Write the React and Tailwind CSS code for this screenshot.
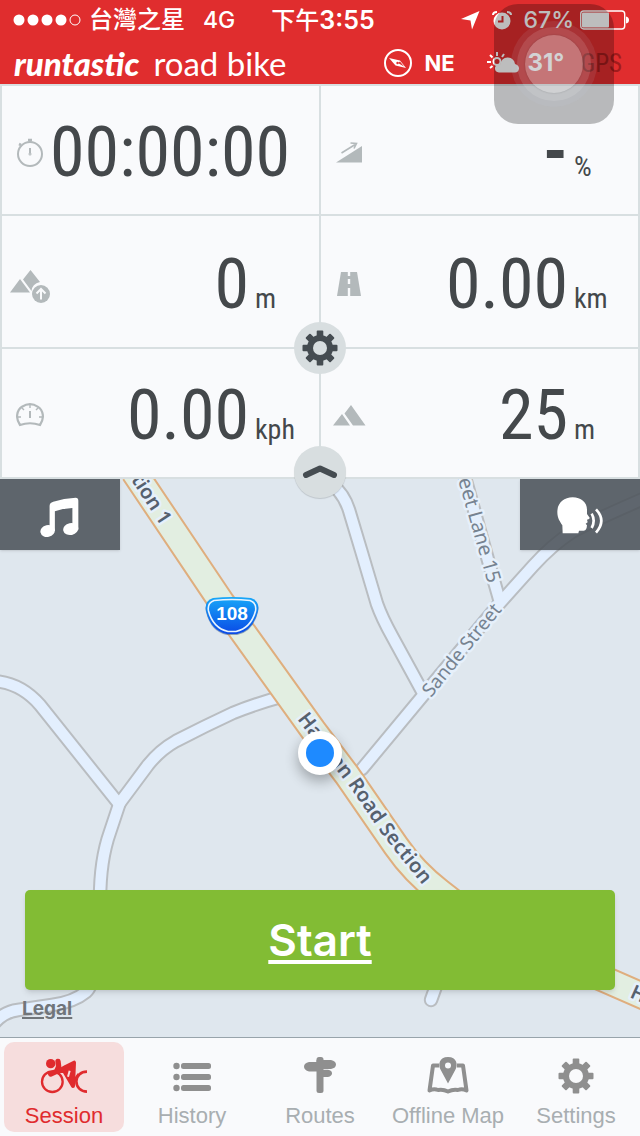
import React from 'react';

const tabs = [
  { name: 'Session', icon: CyclistIcon, active: true },
  { name: 'History', icon: ListIcon },
  { name: 'Routes', icon: SignpostIcon },
  { name: 'Offline Map', icon: MapPinIcon },
  { name: 'Settings', icon: TabGearIcon },
];

const stats = [
  { label: 'Duration', value: '00:00:00', icon: StopwatchIcon },
  { label: 'Grade', value: '-', unit: '%', icon: GradeIcon, empty: true },
  { label: 'Elevation gain', value: '0', unit: 'm', icon: ElevationGainIcon },
  { label: 'Distance', value: '0.00', unit: 'km', icon: RoadIcon },
  { label: 'Speed', value: '0.00', unit: 'kph', icon: SpeedIcon },
  { label: 'Elevation', value: '25', unit: 'm', icon: MountainIcon },
];

const minorRoads = [
  'M-8 681 Q20 682 40 705 L119 804',
  'M119 804 L148 765 Q160 750 176 741 Q205 726 233 713 Q255 704 284 696',
  'M120 802 L110 832 Q100 860 100 900 Q100 980 86 992 Q74 1002 52 1005 L18 1010 Q2 1012 -8 1026',
  'M322 478 Q342 488 349 510 L361 550 L377 604 Q382 618 392 636 L422 691',
  'M362 769 L499 604 L533 566 Q552 545 572 532 Q590 522 650 496',
  'M464 474 L488 560 L500 602',
  'M440 975 L431 1000',
];

const mainRoad = 'M134 472 L222 603 L313 730 L347 775 L396 846 Q414 872 440 892 Q480 925 540 951 L652 1000';

// Stat icons
function StopwatchIcon() {
  return (
    <svg width="28" height="29" viewBox="0 0 28 29" fill="none" stroke="#b3b9bb" strokeWidth="2">
      <circle cx="14" cy="16" r="12" />
      <path d="M14 10v5" />
      <path d="M12 2h4M14 2v3M3 6l2 1" strokeWidth="2.600" />
      <circle cx="14" cy="16" r="0.500" />
    </svg>
  );
}

function GradeIcon() {
  return (
    <svg width="26" height="21" viewBox="0 0 26 21">
      <path d="M0 20.500L26 4v16.500z" fill="#b3b9bb" />
      <path d="M5.500 11L20 2M14.500 1L20.500 1.500L18 6.500" fill="none" stroke="#b3b9bb" strokeWidth="1.600" />
    </svg>
  );
}

function ElevationGainIcon() {
  return (
    <svg width="40" height="39" viewBox="0 -6 40 39">
      <path d="M0 22.500L10 9l10 13.500zM13 9.500L20.500 0L30 12q-8 2-8.500 9z" fill="#b3b9bb" />
      <circle cx="31" cy="24" r="9" fill="#b3b9bb" />
      <path d="M31 29.500V19.500M26.500 23.500L31 19l4.500 4.500" fill="none" stroke="#f9fafc" strokeWidth="2" />
    </svg>
  );
}

function RoadIcon() {
  return (
    <svg width="24" height="24" viewBox="0 0 24 24">
      <path d="M4 0h16l4 24H0z" fill="#b3b9bb" />
      <path d="M12 0v4M12 7v5M12 16v8" stroke="#f9fafc" strokeWidth="2.400" />
    </svg>
  );
}

function SpeedIcon() {
  return (
    <svg width="28" height="24" viewBox="0 0 28 24" fill="none" stroke="#b3b9bb">
      <path d="M4 22C-1 15 1 7 6 3.800Q14-1.500 22 3.800C27 7 29 15 24 22Q14 18.500 4 22z" strokeWidth="2.200" />
      <path d="M14 8v7" strokeWidth="2" />
      <path d="M14 2v3M6 5l2 2M22 5l-2 2M2 14h3M26 14h-3" strokeWidth="1.400" />
    </svg>
  );
}

function MountainIcon() {
  return (
    <svg width="33" height="21" viewBox="0 0 33 21" fill="#b3b9bb">
      <path d="M0 20.500L9 9l8 11.500zM11.500 8.500L18 0l14.500 20.500H20z" />
    </svg>
  );
}

// Shared gear outline, the colour is taken from the text colour
function Gear({ size, hole }) {
  return (
    <svg width={size} height={size} viewBox="0 0 36 36" fill="currentColor">
      {[0, 45, 90, 135].map((angle) => (
        <rect key={angle} x="14.700" y="0.500" width="6.600" height="35" rx="1" transform={`rotate(${angle} 18 18)`} />
      ))}
      <circle cx="18" cy="18" r="13" />
      <circle cx="18" cy="18" r="7" fill={hole} />
    </svg>
  );
}

// Tab icons
function CyclistIcon() {
  return (
    <svg width="48" height="36" viewBox="0 0 144 108" fill="none" stroke="#e02b2e">
      <circle cx="37" cy="71" r="31" strokeWidth="7" />
      <circle cx="32" cy="17" r="14" fill="#e02b2e" stroke="none" />
      <path d="M54 10L56 26L50 40L32 48" strokeWidth="16" strokeLinecap="round" strokeLinejoin="round" />
      <path d="M54 40L78 26L102 14L99 84L72 38z" fill="#e02b2e" strokeWidth="12" strokeLinejoin="round" />
      <path d="M89 38L84 56" stroke="#f6dddd" strokeWidth="6" />
      <path d="M98 74L116 48" strokeWidth="8" />
      <path d="M141 41C122 41 109 54 109 70C109 87 122 101 141 101" strokeWidth="8" />
    </svg>
  );
}

function ListIcon() {
  return (
    <svg width="38" height="32" viewBox="0 0 38 32" fill="#8f8f8f">
      {[6, 17, 28].map((y) => (
        <g key={y}>
          <circle cx="3.500" cy={y} r="3.200" />
          <rect x="8" y={y - 3} width="30" height="6" rx="2.500" />
        </g>
      ))}
    </svg>
  );
}

function SignpostIcon() {
  return (
    <svg width="32" height="38" viewBox="0 0 32 38" fill="#8f8f8f">
      <rect x="12.500" y="0" width="7" height="36" rx="2.500" />
      <path d="M5 5H16V14.500H5Q0 13 0 9.500T5 5z" />
      <path d="M12.500 3H27Q32 4 32 7.500T27 12H12.500z" />
      <path d="M16 12.800H24Q28 13.500 28 16.200T24 20H16z" />
    </svg>
  );
}

function MapPinIcon() {
  return (
    <svg width="42" height="39" viewBox="0 0 42 39">
      <path d="M12 8.500H6L2.500 33.500Q7 31.500 11 33Q16 32 21 34.500Q26 32 31 33Q35 31.500 39.500 33.500L36 8.500H30" fill="none" stroke="#8f8f8f" strokeWidth="4" strokeLinejoin="round" />
      <path d="M21 0C12 0 11 8 13.500 12.500L21 26.500L28.500 12.500C31 8 30 0 21 0z" fill="#8f8f8f" />
      <circle cx="21" cy="8.500" r="3" fill="#f9fafc" />
    </svg>
  );
}

function TabGearIcon() {
  return <Gear size={36} hole="#f9fafc" />;
}

const StatusBar = () => (
  <div className="grid h-10 grid-cols-[1fr_auto_1fr] items-center pl-[13px] pr-[11px] text-2xl leading-none">
    <div className="flex items-center whitespace-nowrap">
      <svg width="68" height="12" viewBox="0 0 68 12" fill="#fff">
        {[6, 20, 34, 48].map((x) => (
          <circle key={x} cx={x} cy="6" r="5.500" />
        ))}
        <circle cx="62" cy="6" r="5" fill="none" stroke="#fff" />
      </svg>
      <span className="ml-2 font-medium">台灣之星</span>
      <span className="ml-[18px] text-[23px] font-medium">4G</span>
    </div>
    <div className="pl-1 font-medium">
      下午<span className="text-[25px] font-semibold">3:55</span>
    </div>
    <div className="flex items-center justify-end">
      <svg width="19" height="19" viewBox="0 0 19 19" fill="#fff">
        <path d="M18.500 0L11 18.500L9.500 9.500L0 8z" />
      </svg>
      <svg className="ml-3" width="20" height="19" viewBox="0 0 20 19">
        <circle cx="10" cy="10" r="8.500" fill="#fff" />
        <path d="M1 4Q1 1 5 1M19 4Q19 1 15 1" fill="none" stroke="#fff" strokeWidth="2" />
        <path d="M10.500 5v5.500H6" fill="none" stroke="#e02d2e" strokeWidth="2" />
      </svg>
      <span className="ml-3 text-[23px] font-medium">67%</span>
      <svg className="ml-1.5" width="49" height="20" viewBox="0 0 49 20">
        <rect x="0.700" y="1" width="44" height="18" rx="3" fill="none" stroke="#fff" strokeWidth="1.400" />
        <rect x="2" y="2.500" width="27" height="15" rx="1" fill="#fff" />
        <path d="M46 6.500Q49 7 49 10T46 13.500z" fill="#fff" />
      </svg>
    </div>
  </div>
);

const TitleBar = () => (
  <div className="flex h-11 items-center pl-3.5 pr-[18px] pt-0.5">
    <h1 className="flex items-center gap-3.5 whitespace-nowrap font-[Lato] text-[33px] leading-none">
      <span className="font-black italic">runtastic</span>
      <span>road bike</span>
    </h1>
    <svg className="ml-auto" width="28" height="28" viewBox="0 0 28 28">
      <circle cx="14" cy="14" r="13" fill="none" stroke="#fff" strokeWidth="2" />
      <path d="M5 9L16 11.500L22 19L11.500 16.500z" fill="#fff" />
      <path d="M14 14L16 12.500L20 17.500z" fill="#e02d2e" />
      <circle cx="13.500" cy="14" r="1.200" fill="#e02d2e" />
    </svg>
    <span className="ml-3 text-[22px] font-bold leading-none">NE</span>
    <svg className="ml-8" width="33" height="22" viewBox="0 0 33 22">
      <path d="M10 0v4M3 3l2.500 2.500M17 2l-2 3M0 10h4M3 16l2.500-2" stroke="#fff" strokeWidth="2" fill="none" />
      <circle cx="10" cy="9.500" r="3.500" stroke="#fff" strokeWidth="2" fill="none" />
      <path d="M12 20.500Q7.500 20 8 15.500Q9 12 13 12.500Q15 5 21 5.500Q27 6 28 12Q32 13 32 16.500Q31.500 20.500 28 20.500z" fill="#fff" />
    </svg>
    <span className="ml-2 text-2xl font-bold leading-none">31°</span>
    <span className="ml-4 font-['Roboto_Condensed',sans-serif] text-[25px] leading-none text-[#a11b1c]">GPS</span>
  </div>
);

const AssistiveTouch = () => (
  <button
    aria-label="AssistiveTouch"
    className="absolute right-[26px] top-1 z-20 flex h-[120px] w-[120px] items-center justify-center rounded-3xl bg-black/26"
  >
    <span className="flex h-[86px] w-[86px] items-center justify-center rounded-full bg-[#c8d0e0]/10">
      <span className="flex h-[74px] w-[74px] items-center justify-center rounded-full bg-white/12">
        <span className="h-[58px] w-[58px] rounded-full bg-white/24 shadow-[0_0_2px_rgba(0,0,0,0.2)]" />
      </span>
    </span>
  </button>
);

const StatCell = ({ stat }) => {
  const Icon = stat.icon;
  return (
    <div className="flex items-center bg-[#f9fafc] pt-1 text-[#44484b]" aria-label={stat.label}>
      <div className="flex w-14 shrink-0 justify-center">
        <Icon />
      </div>
      {stat.unit ? (
        <div className="flex flex-1 items-baseline leading-none">
          <span className={stat.empty ? 'flex-1 text-right text-[70px] font-bold' : 'flex-1 text-right text-[70px]'}>
            {stat.value}
          </span>
          <span className="w-[70px] shrink-0 pl-1.5 text-[28px]">{stat.unit}</span>
        </div>
      ) : (
        <span className="-ml-2 text-[70px] leading-none">{stat.value}</span>
      )}
    </div>
  );
};

const StatPanel = () => (
  <section className="relative z-10 grid grid-cols-2 grid-rows-[128px_131px_128px] gap-0.5 bg-[#d8dfe1] p-0.5 font-['Roboto_Condensed',sans-serif]">
    {stats.map((stat) => (
      <StatCell key={stat.label} stat={stat} />
    ))}
    <button
      aria-label="Configure"
      className="absolute left-1/2 top-[238px] flex h-[52px] w-[52px] -translate-x-1/2 items-center justify-center rounded-full bg-[#d8dee0] text-[#454c51]"
    >
      <Gear size={36} hole="#d8dee0" />
    </button>
    <button
      aria-label="Collapse"
      className="absolute -bottom-[19px] left-1/2 flex h-[52px] w-[52px] -translate-x-1/2 items-center justify-center rounded-full bg-[#d8dee0] shadow-[0_1px_1px_rgba(0,0,0,0.15)]"
    >
      <svg width="36" height="14" viewBox="0 0 36 14" fill="none" stroke="#454c51" strokeWidth="6" strokeLinecap="round" strokeLinejoin="round">
        <path d="M4 10L18 3.500L32 10" />
      </svg>
    </button>
  </section>
);

const MapCanvas = () => (
  <svg
    className="absolute inset-0 h-full w-full font-['Noto_Sans',sans-serif]"
    viewBox="0 479 640 558"
    preserveAspectRatio="xMidYMid slice"
    fill="none"
  >
    <defs>
      <path id="mainRoadLabel" d="M297 719L351 789L384 837L429 893L470 930" />
      <linearGradient id="shield" x1="0" y1="0" x2="0" y2="1">
        <stop offset="0" stopColor="#18a8f8" />
        <stop offset="1" stopColor="#0a49e6" />
      </linearGradient>
      <filter id="soft" x="-100%" y="-100%" width="300%" height="300%">
        <feGaussianBlur stdDeviation="7" />
      </filter>
    </defs>

    <g stroke="#b9bdc1" strokeWidth="14.500" strokeLinecap="round" strokeLinejoin="round">
      {minorRoads.map((d) => <path key={d} d={d} />)}
    </g>
    <g stroke="#e3effe" strokeWidth="10.500" strokeLinecap="round" strokeLinejoin="round">
      {minorRoads.map((d) => <path key={d} d={d} />)}
    </g>
    <path d={mainRoad} stroke="#dfae7e" strokeWidth="28" />
    <path d={mainRoad} stroke="#e2eee1" strokeWidth="24" />

    <g stroke="#e6f0fb" strokeWidth="5" strokeLinejoin="round" style={{ paintOrder: 'stroke' }}>
      <g fill="#56616f" fontSize="20" fontWeight="600">
        <text textAnchor="end" transform="translate(161 526) rotate(57)">tion 1</text>
        <text>
          <textPath href="#mainRoadLabel">Hannan Road Section</textPath>
        </text>
        <text transform="translate(629 997) rotate(24)">H</text>
      </g>
      <g fill="#768391">
        <text fontSize="20" textAnchor="end" transform="translate(488 584) rotate(74)">eet Lane 15</text>
        <text fontSize="19" transform="translate(431 698) rotate(-51)">Sande Street</text>
      </g>
    </g>

    <path d="M213 599Q232 597 251 599Q260 602 258 612Q253 632 237 635H227Q211 632 206 612Q204 602 213 599z" fill="#2b4f87" opacity="0.5" />
    <path d="M213 598Q232 596 251 598Q260 601 258 611Q253 631 237 634H227Q211 631 206 611Q204 601 213 598z" fill="url(#shield)" />
    <path d="M214 600.500Q232 598.500 250 600.500Q257 603 255.500 611Q251 628 236 631.500H228Q213 628 208.500 611Q207 603 214 600.500z" stroke="#e8f4ff" strokeWidth="1.600" />
    <text x="232" y="620" textAnchor="middle" fill="#fff" fontSize="19" fontWeight="700" fontFamily="Liberation Sans, sans-serif">108</text>

    <circle cx="320" cy="759" r="22" fill="#000" opacity="0.3" filter="url(#soft)" />
    <circle cx="320" cy="753" r="22" fill="#fff" />
    <circle cx="320" cy="753" r="14" fill="#1e8aff" />
  </svg>
);

const MapSection = () => (
  <main className="relative flex flex-1 flex-col overflow-hidden bg-[#dfe7ee]">
    <MapCanvas />
    <div className="relative flex justify-between">
      <button aria-label="Music" className="flex h-[71px] w-[120px] items-center justify-center bg-[#4c535a]/88 pr-0.5 pt-1.5 shadow-sm">
        <svg width="39" height="41" viewBox="118 66 118 122" fill="#fff">
          <path d="M147 92Q147 82 158 79Q190 69 226 67Q234 67 234 76V164H216V98Q190 99 163 108V168H147z" />
          <ellipse cx="141" cy="168" rx="22" ry="18" transform="rotate(-12 141 168)" />
          <ellipse cx="211" cy="162" rx="23" ry="18" transform="rotate(-12 211 162)" />
        </svg>
      </button>
      <button aria-label="Voice feedback" className="flex h-[71px] w-[120px] items-center justify-center bg-[#4c535a]/88 pt-0.5 shadow-sm">
        <svg width="46" height="37" viewBox="713 497 138 111" fill="#fff">
          <path d="M730 606L729 582C722 570 714 562 714 542C714 515 733 498 760 498C785 498 803 513 803 535V548L811 559Q812 564 803 565L805 573L799 577L803 582C802 593 800 598 793 598H779L777 606z" />
          <path d="M817 547Q829 568 817 590M830 534Q862 568 830 604" fill="none" stroke="#fff" strokeWidth="8" />
        </svg>
      </button>
    </div>
    <button className="relative mx-[25px] mt-auto h-[100px] rounded-[5px] bg-[#82bc34] text-[44px] font-semibold text-white underline decoration-4 underline-offset-4 shadow-md">
      Start
    </button>
    <div className="relative h-[47px] pl-[22px] pt-[7px]">
      <a href="#legal" className="text-[19px] leading-6 font-bold text-[#70757a] underline decoration-2 underline-offset-2">
        Legal
      </a>
    </div>
  </main>
);

const TabBar = () => (
  <nav className="grid h-[99px] grid-cols-5 border-t border-[#98a4ab] bg-[#f9fafc] font-['Liberation_Sans',sans-serif]">
    {tabs.map(({ name, icon: Icon, active }) => (
      <button
        key={name}
        className={
          active
            ? 'm-1 flex flex-col items-center rounded-[10px] bg-[#f6dddd] text-[#e02b2e]'
            : 'my-1 flex flex-col items-center text-[#8f8f8f]'
        }
      >
        <span className="flex h-[68px] items-center">
          <Icon />
        </span>
        <span className={active ? '-mt-1 whitespace-nowrap text-[22px] leading-5' : '-mt-1 whitespace-nowrap text-[22px] leading-5 text-[#a8aeb1]'}>
          {name}
        </span>
      </button>
    ))}
  </nav>
);

export default function App() {
  return (
    <div className="relative flex min-h-screen flex-col font-['Inter','Noto_Sans_CJK_TC',sans-serif]">
      <header className="bg-[#e02d2e] text-white">
        <StatusBar />
        <TitleBar />
      </header>
      <AssistiveTouch />
      <StatPanel />
      <MapSection />
      <TabBar />
    </div>
  );
}
